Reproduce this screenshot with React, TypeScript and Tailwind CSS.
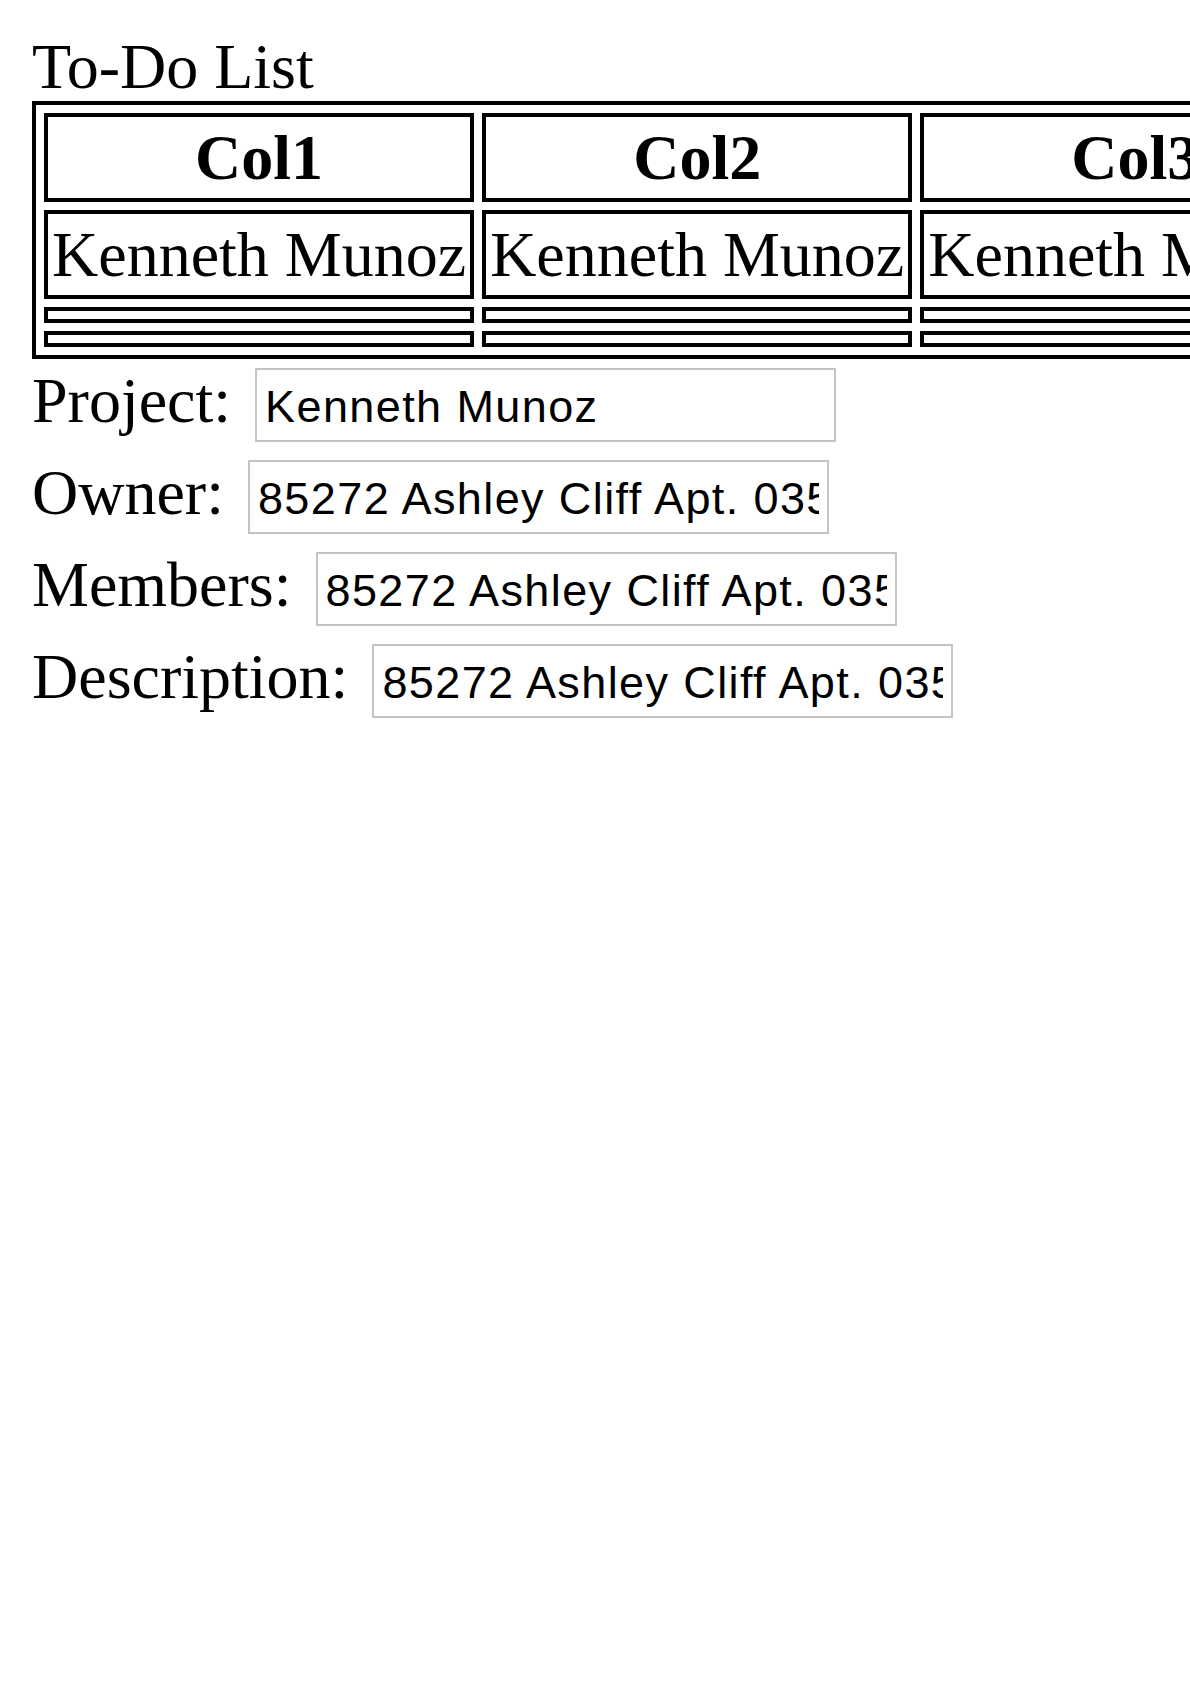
const columns = ["Col1", "Col2", "Col3", "Col4"];

const fields = [
  { label: "Project:", value: "Kenneth Munoz" },
  { label: "Owner:", value: "85272 Ashley Cliff Apt. 035" },
  { label: "Members:", value: "85272 Ashley Cliff Apt. 035" },
  { label: "Description:", value: "85272 Ashley Cliff Apt. 035" },
];

const cell = "border-4 border-black p-1 whitespace-nowrap leading-[73px]";

export default function App() {
  return (
    <div className="min-h-screen w-full overflow-hidden bg-white p-8 font-['Liberation_Serif','Times_New_Roman',serif] text-[64px] leading-[71px] text-black">
      <div className="leading-[69px]">To-Do List</div>

      <table className="border-separate border-spacing-[8px] border-4 border-black">
        <thead>
          <tr>
            {columns.map((c) => (
              <th key={c} className={`${cell} text-center font-bold`}>
                {c}
              </th>
            ))}
          </tr>
        </thead>
        <tbody>
          <tr>
            {columns.map((c) => (
              <td key={c} className={`${cell} text-left`}>
                Kenneth Munoz
              </td>
            ))}
          </tr>
          <tr>
            {columns.map((c) => (
              <td key={c} className={cell}></td>
            ))}
          </tr>
          <tr>
            {columns.map((c) => (
              <td key={c} className={cell}></td>
            ))}
          </tr>
        </tbody>
      </table>

      <div className="pt-px">
        {fields.map((f) => (
          <div key={f.label} className="flex h-[92px] items-baseline">
            <span className="whitespace-nowrap">{f.label}</span>
            <input
              type="text"
              defaultValue={f.value}
              className="ml-6 mr-2 mt-2 h-[74px] w-[581px] shrink-0 border-2 border-[#c4c4c4] bg-white px-2 pt-[3px] font-['Liberation_Sans',Arial,sans-serif] text-[45px] tracking-[1.4px] text-black outline-none"
            />
          </div>
        ))}
      </div>
    </div>
  );
}
